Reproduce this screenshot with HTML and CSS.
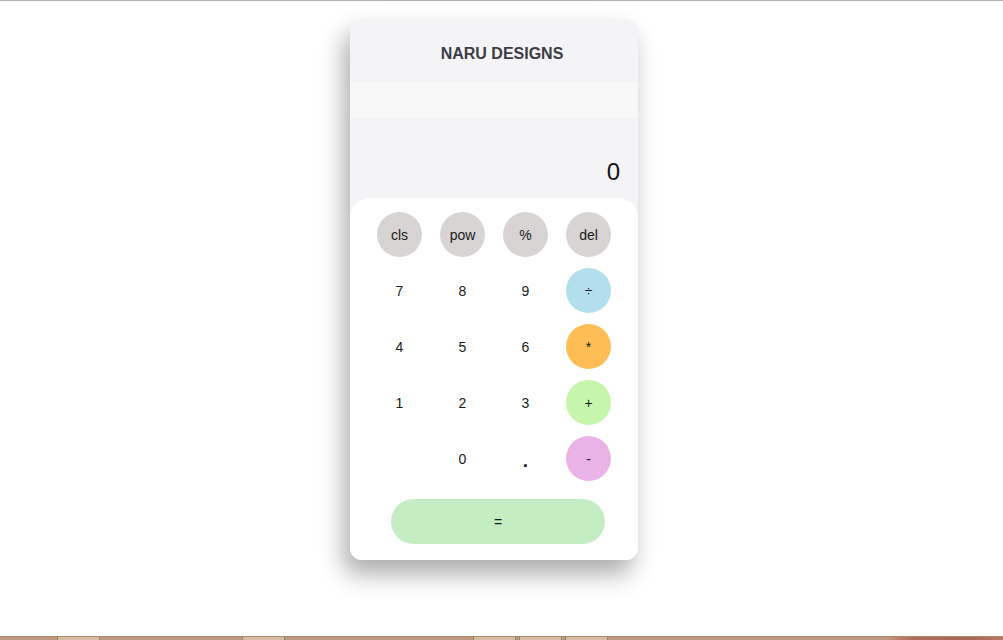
FILE: index.html
```html
<!DOCTYPE html>
<html lang="en">
<head>
<meta charset="utf-8">
<title>Calculator</title>
<link rel="stylesheet" href="styles.css">
</head>
<body>
<div class="topline"></div>
<main class="stage">
  <div class="calc">
    <header class="calc-head">NARU DESIGNS</header>
    <div class="calc-band"></div>
    <div class="calc-display"><span class="calc-value">0</span></div>
    <div class="keypad">
      <div class="keys">
        <button class="key key-gray">cls</button>
        <button class="key key-gray">pow</button>
        <button class="key key-gray">%</button>
        <button class="key key-gray">del</button>
        <button class="key">7</button>
        <button class="key">8</button>
        <button class="key">9</button>
        <button class="key key-blue">÷</button>
        <button class="key">4</button>
        <button class="key">5</button>
        <button class="key">6</button>
        <button class="key key-orange">*</button>
        <button class="key">1</button>
        <button class="key">2</button>
        <button class="key">3</button>
        <button class="key key-green">+</button>
        <span class="key key-empty"></span>
        <button class="key">0</button>
        <button class="key key-dot">.</button>
        <button class="key key-pink">-</button>
      </div>
      <button class="equals">=</button>
    </div>
  </div>
</main>
<footer class="taskbar">
  <span class="tb-item tb-a"></span>
  <span class="tb-item tb-b"></span>
  <span class="tb-item tb-c"></span>
  <span class="tb-item tb-d"></span>
  <span class="tb-item tb-e"></span>
  <span class="tb-tray"></span>
</footer>
</body>
</html>
```
FILE: styles.css
```css
html, body {
  margin: 0;
  padding: 0;
  height: 100%;
}
body {
  background: #ffffff;
  font-family: "Liberation Sans", Arial, sans-serif;
  display: flex;
  flex-direction: column;
  min-height: 640px;
  overflow: hidden;
}
.topline {
  height: 1px;
  background: #b3b3b3;
  flex: none;
}
.stage {
  flex: 1;
  display: flex;
  justify-content: center;
  align-items: flex-start;
  padding: 18px 15px 0 0;
}
.calc {
  width: 288px;
  background: #f4f4f6;
  border-radius: 12px;
  box-shadow: -6px 14px 24px rgba(0, 0, 0, 0.33);
  display: flex;
  flex-direction: column;
}
.calc-head {
  height: 63px;
  box-sizing: border-box;
  padding: 26px 0 0 16px;
  text-align: center;
  font-size: 16px;
  font-weight: bold;
  line-height: 18px;
  color: #3c3c44;
}
.calc-band {
  height: 36px;
  background: #f8f8f9;
}
.calc-display {
  height: 80px;
  box-sizing: border-box;
  display: flex;
  justify-content: flex-end;
  align-items: flex-end;
  padding: 0 18px 12px 0;
}
.calc-value {
  font-size: 24px;
  line-height: 28px;
  color: #111111;
}
.keypad {
  background: #ffffff;
  border-radius: 20px 20px 12px 12px;
  padding: 14px 0 16px;
  display: flex;
  flex-direction: column;
}
.keys {
  display: grid;
  grid-template-columns: repeat(4, 45px);
  column-gap: 18px;
  row-gap: 11px;
  padding: 0 27px;
}
.key {
  width: 45px;
  height: 45px;
  border: none;
  border-radius: 50%;
  background: transparent;
  font-family: "Liberation Sans", Arial, sans-serif;
  font-size: 14px;
  color: #1a1a1a;
  padding: 0;
  display: flex;
  align-items: center;
  justify-content: center;
}
.key-gray { background: #d8d4d4; }
.key-blue { background: #b3deec; }
.key-orange { background: #febd55; }
.key-green { background: #c5f6ab; }
.key-pink { background: #e9b3e7; }
.key-dot { font-size: 19px; font-weight: bold; padding-top: 4px; }
.equals {
  align-self: flex-start;
  margin: 18px 0 0 41px;
  width: 214px;
  height: 45px;
  border: none;
  border-radius: 23px;
  background: #c4edc3;
  font-family: "Liberation Sans", Arial, sans-serif;
  font-size: 14px;
  color: #1a1a1a;
}
.taskbar {
  flex: none;
  height: 3px;
  background: #bc987c;
  border-top: 1px solid #a88a72;
  display: flex;
}
.tb-item {
  height: 3px;
  background: #d5bca5;
  border-left: 1px solid #9c8068;
  border-right: 1px solid #9c8068;
  box-sizing: border-box;
  width: 43px;
}
.tb-a { margin-left: 57px; }
.tb-b { margin-left: 142px; }
.tb-c { margin-left: 188px; }
.tb-d { margin-left: 3px; }
.tb-e { margin-left: 3px; }
.tb-tray {
  margin-left: auto;
  width: 115px;
  height: 3px;
  background: linear-gradient(90deg, #c1957e, #b06e5e 20%, #a86656 70%, #b87a68);
}
```
